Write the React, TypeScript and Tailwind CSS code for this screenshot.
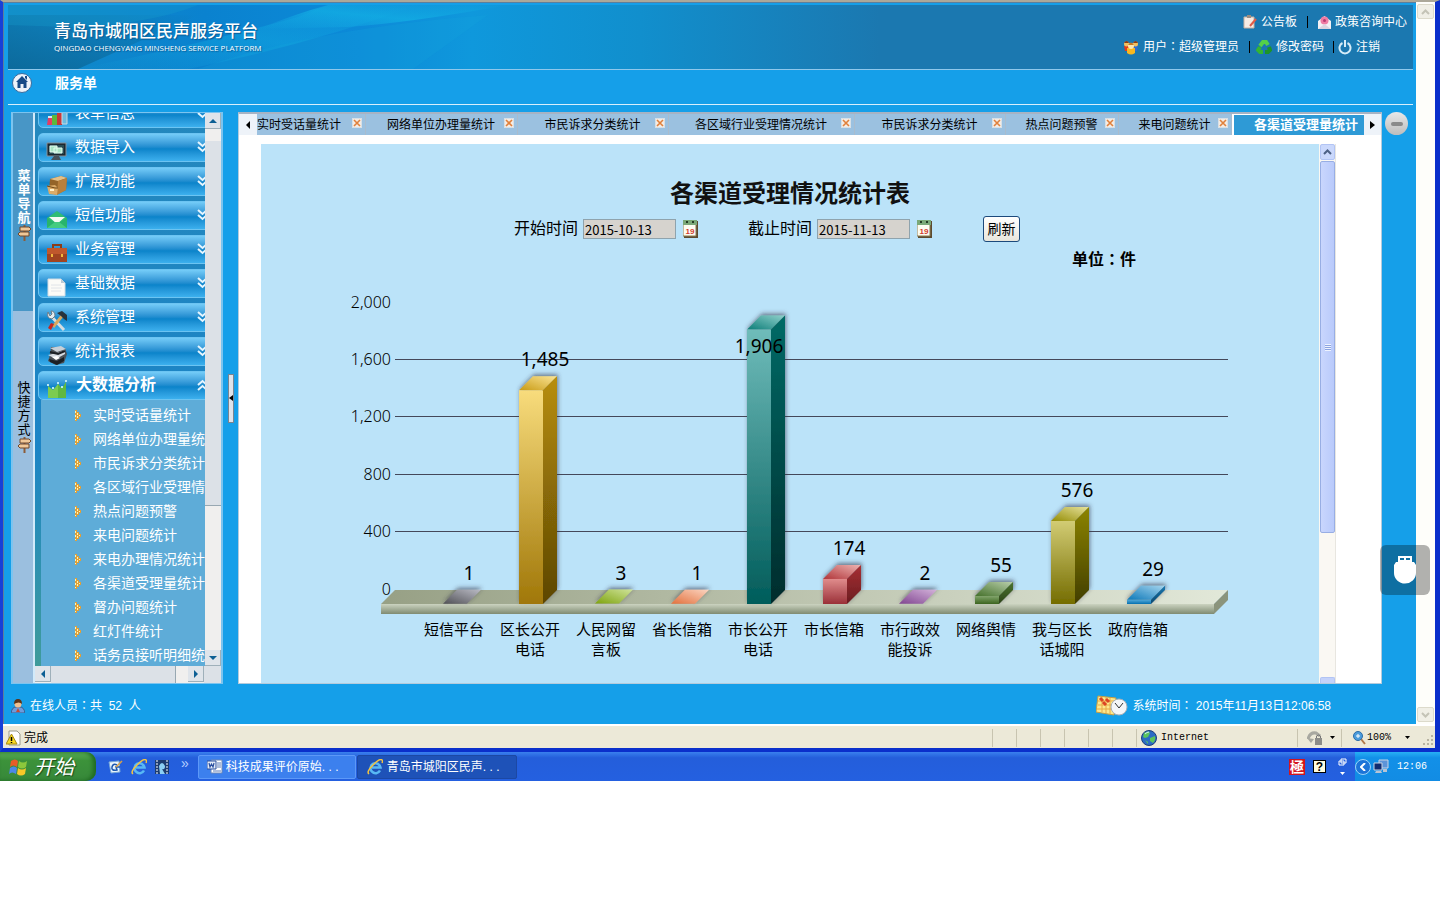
import { useState, type ReactNode } from "react";

interface Channel {
  name: string[];
  value: number;
  front: [string, string];
  side: [string, string];
  top: [string, string];
  labelInside?: boolean;
}

const CHANNELS: Channel[] = [
  { name: ["短信平台"], value: 1, front: ["#8a8a90", "#55555c"], side: ["#66666c", "#333338"], top: ["#505055", "#b9bac4"] },
  { name: ["区长公开", "电话"], value: 1485, front: ["#f8dc7c", "#a07708"], side: ["#b88e0a", "#5c4604"], top: ["#c99b14", "#fbe596"] },
  { name: ["人民网留", "言板"], value: 3, front: ["#a8c850", "#6d9408"], side: ["#80a820", "#4f6d08"], top: ["#7ea30e", "#cfe39a"] },
  { name: ["省长信箱"], value: 1, front: ["#f0a080", "#d06838"], side: ["#d08058", "#904820"], top: ["#e2703c", "#fbd4c0"] },
  { name: ["市长公开", "电话"], value: 1906, front: ["#6fbcba", "#005c5a"], side: ["#006a66", "#002c2c"], top: ["#0c7d78", "#8fd0cb"], labelInside: true },
  { name: ["市长信箱"], value: 174, front: ["#e08c8c", "#9a3038"], side: ["#a83034", "#6a1c20"], top: ["#b03438", "#eeb4b2"] },
  { name: ["市行政效", "能投诉"], value: 2, front: ["#b088b8", "#704078"], side: ["#906098", "#503058"], top: ["#804590", "#d3b2da"] },
  { name: ["网络舆情"], value: 55, front: ["#80a468", "#3c6420"], side: ["#4c7430", "#2c4418"], top: ["#44702a", "#b8ceaa"] },
  { name: ["我与区长", "话城阳"], value: 576, front: ["#d2cc74", "#746c00"], side: ["#8c8400", "#423e00"], top: ["#948c04", "#e6e29c"] },
  { name: ["政府信箱"], value: 29, front: ["#50a8d8", "#0870b0"], side: ["#1878b0", "#084870"], top: ["#0c78b8", "#a4d4ee"] },
];

const GRID = [
  { label: "2,000", y: 31, line: false },
  { label: "1,600", y: 88, line: true },
  { label: "1,200", y: 145, line: true },
  { label: "800", y: 203, line: true },
  { label: "400", y: 260, line: true },
  { label: "0", y: 318, line: false },
];

const BASE_Y = 333;
const BAR_WIDTH = 24;
const DEPTH = 14;
const UNIT = 0.144;

const MENU = [
  { label: "表单信息", icon: <BooksIcon /> },
  { label: "数据导入", icon: <MonitorIcon /> },
  { label: "扩展功能", icon: <BoxIcon /> },
  { label: "短信功能", icon: <EnvelopeIcon /> },
  { label: "业务管理", icon: <BriefcaseIcon /> },
  { label: "基础数据", icon: <PaperIcon /> },
  { label: "系统管理", icon: <ToolsIcon /> },
  { label: "统计报表", icon: <PrinterIcon /> },
];

const SUB_MENU = [
  "实时受话量统计",
  "网络单位办理量统计",
  "市民诉求分类统计",
  "各区域行业受理情况统计",
  "热点问题预警",
  "来电问题统计",
  "来电办理情况统计",
  "各渠道受理量统计",
  "督办问题统计",
  "红灯件统计",
  "话务员接听明细统计",
];

const TABS = [
  { label: "实时受话量统计", width: "w-[109px]", text: "text-left" },
  { label: "网络单位办理量统计", width: "w-[152px]", text: "pl-3 text-center" },
  { label: "市民诉求分类统计", width: "w-[151px]", text: "pl-3 text-center" },
  { label: "各区域行业受理情况统计", width: "w-[186px]", text: "pl-3 text-center" },
  { label: "市民诉求分类统计", width: "w-[151px]", text: "pl-3 text-center" },
  { label: "热点问题预警", width: "w-[113px]", text: "pl-3 text-center" },
  { label: "来电问题统计", width: "w-[113px]", text: "pl-3 text-center" },
];

export default function App() {
  return (
    <div className="min-h-screen min-w-[1200px] overflow-hidden bg-white font-['Liberation_Sans','Noto_Sans_CJK_SC',sans-serif] text-xs text-black">
      <div className="relative border-t-2 border-r-[5px] border-b-4 border-l-[3px] border-t-[#aca899] border-r-[#0a2fcb] border-b-[#0a2fcb] border-l-[#1740d8]">
        <div className="flex">
          <div className="min-w-0 flex-1 border-t border-l border-[#5c7f9c] bg-[#159fe9]">
            <Banner />
            <nav className="mr-[3px] ml-1 flex h-[35px] items-center border-b border-[#d8effc] pb-2">
              <a href="#home" aria-label="首页" className="ml-1">
                <HomeIcon />
              </a>
              <a href="#orders" className="ml-[23px] text-sm font-bold text-white">
                服务单
              </a>
            </nav>
            <div className="mt-[7px] ml-[7px] flex h-[572px]">
              <Sidebar />
              <div className="flex w-[15px] items-center justify-center">
                <button aria-label="收起菜单" className="flex h-[49px] w-[6px] items-center border border-[#7a8490] bg-[#dfe3ea]">
                  <svg viewBox="0 0 4 6" className="h-[6px] w-1">
                    <path d="M4 0v6L0 3z" />
                  </svg>
                </button>
              </div>
              <Workspace />
              <div className="w-[34px] pl-[3px]">
                <button aria-label="最小化" className="flex size-[23px] items-center justify-center rounded-full bg-linear-to-b from-[#e8e8e8] to-[#bdbdbd]">
                  <span className="h-1 w-3 rounded-xs bg-[#8a8a8a]" />
                </button>
              </div>
            </div>
            <footer className="ml-[7px] flex h-10 items-center pt-1 text-white">
              <PersonIcon />
              <span className="ml-[5px]">
                在线人员
                <Colon />共&nbsp; 52 &nbsp;人
              </span>
              <span className="mr-[85px] ml-auto flex items-center gap-1">
                <CalendarClockIcon />
                <span>
                  系统时间
                  <Colon />
                  &nbsp;2015年11月13日12:06:58
                </span>
              </span>
            </footer>
          </div>
          <div className="flex w-[19px] flex-col justify-between bg-[#fefefa] px-px py-[2px]">
            <button disabled aria-label="向上滚动" className="flex h-[15px] items-center justify-center rounded-xs border border-[#dcdacb] bg-[#f0efe6]">
              <Chevron up color="#c4c3b6" />
            </button>
            <button disabled aria-label="向下滚动" className="flex h-[15px] items-center justify-center rounded-xs border border-[#dcdacb] bg-[#f0efe6]">
              <Chevron color="#c4c3b6" />
            </button>
          </div>
        </div>
        <StatusBar />
        <button aria-label="USB" className="absolute top-[543px] right-[5px] flex h-[50px] w-[50px] items-center justify-center rounded-md bg-black/30">
          <svg viewBox="0 0 24 28" className="h-7 w-6">
            <path fill="#fff" fillRule="evenodd" d="M5 0h14v6h2l2 3v8a11 10.500 0 0 1-22 0V9l2-3h2zM7 2v2h4V2zm6 0v2h4V2z" />
          </svg>
        </button>
      </div>
      <Taskbar />
    </div>
  );
}

// The traditional face sets the full-width colon in the middle of its cell.
function Colon() {
  return <span className="font-['Noto_Sans_CJK_TC',sans-serif] leading-none">：</span>;
}

function Banner() {
  return (
    <header className="relative mt-[2px] mr-[3px] ml-1 flex h-[65px] justify-between overflow-hidden border-b border-[#8fc8ec] bg-[#1b78b0]">
      <svg viewBox="0 0 1405 64" preserveAspectRatio="none" className="absolute inset-0 h-full w-full">
        <defs>
          <linearGradient id="bannerBase">
            <stop offset="0" stopColor="#118ac8" />
            <stop offset="0.14" stopColor="#0a82cf" />
            <stop offset="0.25" stopColor="#0c8ad8" />
            <stop offset="0.33" stopColor="#0f98dc" />
            <stop offset="0.45" stopColor="#118fcd" />
            <stop offset="0.62" stopColor="#1b78b0" />
          </linearGradient>
          <linearGradient id="bannerGlow" x1="0" y1="1" x2="1" y2="0">
            <stop offset="0" stopColor="#19b8ea" stopOpacity="0" />
            <stop offset="0.5" stopColor="#14b6e6" stopOpacity="0.6" />
            <stop offset="1" stopColor="#14b6e6" stopOpacity="0" />
          </linearGradient>
          <linearGradient id="bannerDark" x1="0" y1="1" x2="1" y2="0">
            <stop offset="0" stopColor="#0c6a9c" />
            <stop offset="1" stopColor="#0c6a9c" stopOpacity="0" />
          </linearGradient>
        </defs>
        <path d="M0 0h1405v64H0z" fill="url(#bannerBase)" />
        <path d="M0 10h190L70 64H0z" fill="url(#bannerDark)" />
        <path d="M0 0h190Q140 20 60 22L0 20z" fill="#18a0cc" opacity="0.3" />
        <path d="M70 64Q190 40 290 12L320 0h90Q300 40 180 64z" fill="url(#bannerGlow)" opacity="0.6" />
        <path d="M250 24Q290 8 320 0h180Q400 18 340 22z" fill="url(#bannerGlow)" />
        <path d="M190 64Q300 24 480 10L405 64z" fill="#14a4dc" opacity="0.25" />
      </svg>
      <div className="relative ml-[46px] pt-[17px] text-white [text-shadow:1px_1px_1px_#0a5b94]">
        <h1 className="text-[17px] leading-5 font-medium whitespace-nowrap">青岛市城阳区民声服务平台</h1>
        <p className="font-['Open_Sans',sans-serif] text-[8px] leading-3 whitespace-nowrap">QINGDAO CHENGYANG MINSHENG SERVICE PLATFORM</p>
      </div>
      <div className="relative mr-[6px] pt-1 text-white">
        <div className="flex h-[25px] items-center justify-end">
          <NoticeIcon />
          <a href="#notice" className="ml-1">公告板</a>
          <span className="mx-[10px] h-3 w-px bg-black" />
          <FlowerIcon />
          <a href="#policy" className="ml-1">政策咨询中心</a>
        </div>
        <div className="mr-[27px] flex h-[25px] items-center">
          <UsersIcon />
          <span className="ml-1">
            用户
            <Colon />
            超级管理员
          </span>
          <span className="mr-[6px] ml-[10px] h-3 w-px bg-black" />
          <RecycleIcon />
          <a href="#password" className="ml-1">修改密码</a>
          <span className="mr-1 ml-[9px] h-3 w-px bg-black" />
          <svg viewBox="0 0 14 16" className="h-4 w-[14px]" fill="none" stroke="#d5ecf8" strokeWidth="2">
            <path d="M4.500 4a5.500 5.500 0 1 0 5 0M7 1v7" />
          </svg>
          <a href="#logout" className="ml-1">注销</a>
        </div>
      </div>
    </header>
  );
}

function Sidebar() {
  return (
    <aside className="flex w-[212px] border-x-2 border-y border-[#7cc4ef]">
      <div className="flex w-5 flex-col">
        <button className="flex h-[198px] flex-col items-center bg-[#4896c6] pt-14 pl-[2px] text-[13px] leading-[14px] font-bold text-white">
          <VerticalText text="菜单导航" />
          <SignIcon />
        </button>
        <button className="flex flex-1 flex-col items-center bg-[#9bbfdf] pt-[70px] pl-[2px] text-[13px] leading-[14px]">
          <VerticalText text="快捷方式" />
          <SignIcon />
        </button>
      </div>
      <div className="flex min-w-0 flex-1 flex-col border-l-2 border-[#d2eafa]">
        <div className="flex h-[553px]">
          <div className="w-[170px] overflow-hidden bg-linear-to-b from-[#2488bd] via-[#1b84c6] via-60% to-[#3f9b9a] pl-[3px]">
            <ul className="-mt-[14px]">
              {MENU.map((item) => (
                <li key={item.label} className="mb-[5px]">
                  <MenuButton icon={item.icon}>{item.label}</MenuButton>
                </li>
              ))}
              <li>
                <MenuButton icon={<CrownIcon />} open>
                  大数据分析
                </MenuButton>
                <ul className="ml-[3px] bg-[#5eacd8] pt-[3px]">
                  {SUB_MENU.map((label) => (
                    <li key={label} className="flex h-6 items-center pl-[34px]">
                      <svg viewBox="0 0 6 11" className="h-[11px] w-[6px] shrink-0">
                        <path d="M0 0h2v2h2v2h2v3H4v2H2v2H0z" fill="#e0a038" />
                        <path d="M0 1h1v2H0zM0 5h1v2H0zM0 9h1v1H0zM2 3h1v2H2zM2 6h1v2H2zM4 5h1v1H4z" fill="#fff4b8" />
                      </svg>
                      <a href="#report" className="ml-3 text-sm leading-6 whitespace-nowrap text-white">
                        {label}
                      </a>
                    </li>
                  ))}
                </ul>
              </li>
            </ul>
          </div>
          <div className="flex flex-1 flex-col bg-[#f0efee]">
            <ArrowButton direction="up" />
            <div className="mt-3 h-[365px] border-b border-[#98a8b2] bg-[#dce1e7]" />
            <div className="flex-1" />
            <ArrowButton direction="down" />
          </div>
        </div>
        <div className="flex flex-1 bg-[#f0efee]">
          <ArrowButton direction="left" />
          <div className="w-[125px] border-r border-[#98a8b2] bg-[#dce1e7]" />
          <div className="w-3" />
          <ArrowButton direction="right" />
          <div className="flex-1 bg-[#dce1e7]" />
        </div>
      </div>
    </aside>
  );
}

function VerticalText({ text }: { text: string }) {
  return (
    <span className="flex flex-col">
      {text.split("").map((char) => (
        <span key={char}>{char}</span>
      ))}
    </span>
  );
}

function MenuButton({ icon, open, children }: { icon: ReactNode; open?: boolean; children: ReactNode }) {
  return (
    <button
      aria-expanded={!!open}
      className="flex h-[29px] w-[180px] items-center rounded-[5px] border border-[#6cc4f2] bg-linear-to-b from-[#74ccf8] via-[#0a84ca] via-55% to-[#3cb0ee] pb-px pl-[7px] text-white"
    >
      <span className="mt-[7px] size-[22px] shrink-0">{icon}</span>
      <span className={open ? "ml-2 text-base font-bold" : "ml-[7px] text-[15px]"}>{children}</span>
      <svg viewBox="0 0 11 12" className="mr-[9px] ml-auto h-3 w-[11px]" fill="none" stroke="#e4f5ff" strokeWidth="2">
        <path d={open ? "M1 6l4.500-4L10 6M1 11l4.500-4L10 11" : "M1 1l4.500 4L10 1M1 6l4.500 4L10 6"} />
      </svg>
    </button>
  );
}

const ARROWS = {
  up: { label: "向上", path: "M0 6l4-4 4 4z" },
  down: { label: "向下", path: "M0 2h8L4 6z" },
  left: { label: "向左", path: "M6 0v8L2 4z" },
  right: { label: "向右", path: "M2 0v8l4-4z" },
};

function ArrowButton({ direction }: { direction: keyof typeof ARROWS }) {
  return (
    <button aria-label={ARROWS[direction].label} className="flex h-4 w-4 shrink-0 items-center justify-center border-r border-b border-[#9fb0ba] bg-[#dfe4ea]">
      <svg viewBox="0 0 8 8" className="size-2" fill="#0c5f94">
        <path d={ARROWS[direction].path} />
      </svg>
    </button>
  );
}

function Workspace() {
  return (
    <main className="flex min-w-0 flex-1 flex-col border border-t-2 border-[#b4cbdc] border-t-[#a6b3c4] bg-white">
      <div className="flex h-[21px] bg-[#9bc1e0]">
        <button aria-label="向左" className="flex w-[18px] shrink-0 items-center justify-center bg-[#eef3f9]">
          <svg viewBox="0 0 5 8" className="h-2 w-[5px]">
            <path d="M4 0v8L0 4z" />
          </svg>
        </button>
        {TABS.map((tab, index) => (
          <div key={index} className={`flex shrink-0 items-center border-r border-[#a9bccd] ${tab.width}`}>
            <button className={`flex-1 whitespace-nowrap ${tab.text}`}>{tab.label}</button>
            <button aria-label="关闭" className="mr-[3px] mb-1 size-[10px] border border-[#d8e0e6] bg-[#f4ece4]">
              <svg viewBox="0 0 8 8" className="size-2" stroke="#e0803c" strokeWidth="1.600">
                <path d="M1 1l6 6M7 1L1 7" />
              </svg>
            </button>
          </div>
        ))}
        <div className="flex min-w-0 flex-1 items-center justify-end overflow-hidden border-t border-l-2 border-white bg-[#2e9ad6] pr-[6px]">
          <button className="text-[13px] font-bold whitespace-nowrap text-white">各渠道受理量统计</button>
        </div>
        <button aria-label="向右" className="flex w-[17px] shrink-0 items-center justify-center bg-[#eef3f9]">
          <svg viewBox="0 0 5 8" className="h-2 w-[5px]">
            <path d="M0 0v8l5-4z" />
          </svg>
        </button>
      </div>
      <div className="mt-[9px] mr-[45px] ml-[22px] flex min-h-0 flex-1">
        <section className="min-w-0 flex-1 overflow-hidden bg-[#bbe3f9]">
          <ReportHeader />
          <ChannelChart />
        </section>
        <div className="flex w-[17px] flex-col border-r border-[#e8e6e0] bg-[#faf8f3] pl-px">
          <button aria-label="向上滚动" className="flex h-4 shrink-0 items-center justify-center rounded-xs border border-[#b2c4f4] bg-[#cad8fc]">
            <Chevron up color="#4d6185" />
          </button>
          <div className="mt-px flex h-[372px] items-center justify-center rounded-xs border border-[#98aee4] bg-linear-to-r from-[#c9d6fd] to-[#b9cafb]">
            <span className="h-[7px] w-[6px] bg-[repeating-linear-gradient(#eef3ff_0_1px,#8ca4e0_1px_2px)]" />
          </div>
          <div className="mt-auto h-[6px] rounded-t-xs border border-b-0 border-[#b2c4f4] bg-[#c4d2fa]" />
        </div>
      </div>
    </main>
  );
}

function ReportHeader() {
  const [start, setStart] = useState("2015-10-13");
  const [end, setEnd] = useState("2015-11-13");

  return (
    <div className="pt-8 text-base">
      <h2 className="text-center text-2xl leading-9 font-bold text-[#111]">各渠道受理情况统计表</h2>
      <div className="mt-[3px] flex h-7 items-center justify-center pr-[46px]">
        <DateField id="start" label="开始时间" value={start} onChange={setStart} />
        <div className="w-[50px]" />
        <DateField id="end" label="截止时间" value={end} onChange={setEnd} />
        <button className="ml-[51px] h-[26px] w-[37px] rounded-[3px] border border-[#1c4a7c] bg-linear-to-b from-white to-[#e8e6dc] text-sm leading-none">
          刷新
        </button>
      </div>
      <p className="mt-1 h-6 pr-[183px] text-right leading-[26px] font-bold">
        单位
        <Colon />件
      </p>
    </div>
  );
}

function DateField({ id, label, value, onChange }: { id: string; label: string; value: string; onChange: (value: string) => void }) {
  return (
    <div className="flex items-center">
      <label htmlFor={id}>{label}</label>
      <input
        id={id}
        value={value}
        onChange={(event) => onChange(event.target.value)}
        className="ml-[5px] h-5 w-[93px] border border-[#8fa3ad] bg-[#d6d3ce] px-px font-['Noto_Sans_CJK_SC',sans-serif] text-[13px]"
      />
      <svg viewBox="0 0 15 18" className="ml-[7px] h-[18px] w-[15px]">
        <path d="M1 1h14v17H1z" fill="#5c4a30" />
        <path d="M0 0h13v16H0z" fill="#fdfcf2" stroke="#8c7c50" />
        <path d="M0 0h14v5H0z" fill="#7aa878" />
        <path d="M3 2h2M9 2h2" stroke="#243c24" strokeWidth="2" />
        <text x="7" y="14" fontSize="8" fontWeight="bold" textAnchor="middle" fill="#d23c2c">19</text>
      </svg>
    </div>
  );
}

function ChannelChart() {
  return (
    <svg viewBox="0 0 1058 411" className="block w-full font-['Noto_Sans','Noto_Sans_CJK_SC',sans-serif]" role="img" aria-label="各渠道受理情况统计表">
      <defs>
        <filter id="barShadow" x="-50%" y="-50%" width="200%" height="200%">
          <feDropShadow dx="1" dy="-2" stdDeviation="2" floodColor="#334" floodOpacity="0.6" />
        </filter>
        <linearGradient id="floorTop">
          <stop offset="0" stopColor="#97a085" />
          <stop offset="1" stopColor="#e2e8d9" />
        </linearGradient>
        <linearGradient id="floorFront" x2="0" y2="1">
          <stop offset="0" stopColor="#cbd3c0" />
          <stop offset="1" stopColor="#7f8b72" />
        </linearGradient>
        {CHANNELS.map((channel, index) => (
          <g key={index}>
            <Shade id={`front${index}`} colors={channel.front} />
            <Shade id={`side${index}`} colors={channel.side} />
            <linearGradient id={`top${index}`} x1="0" y1="1" x2="1" y2="0">
              <stop offset="0" stopColor={channel.top[0]} />
              <stop offset="1" stopColor={channel.top[1]} />
            </linearGradient>
          </g>
        ))}
      </defs>
      {GRID.map((row) => (
        <g key={row.label}>
          <text x="130" y={row.y + 6} fontSize="16" fontWeight="300" textAnchor="end">{row.label}</text>
          {row.line && <path d={`M134 ${row.y + 0.5}H967`} stroke="#44485a" />}
        </g>
      ))}
      <path d={`M120 ${BASE_Y}l14-14h833l-14 14z`} fill="url(#floorTop)" />
      <path d={`M120 ${BASE_Y}h833v10H120z`} fill="url(#floorFront)" />
      <path d={`M953 ${BASE_Y}l14-14v10l-14 14z`} fill="#8b947c" />
      {CHANNELS.map((channel, index) => (
        <Bar key={index} channel={channel} index={index} />
      ))}
    </svg>
  );
}

function Shade({ id, colors }: { id: string; colors: [string, string] }) {
  return (
    <linearGradient id={id} x2="0" y2="1">
      <stop offset="0" stopColor={colors[0]} />
      <stop offset="1" stopColor={colors[1]} />
    </linearGradient>
  );
}

function Bar({ channel, index }: { channel: Channel; index: number }) {
  const x = 182 + index * 76;
  const height = channel.value * UNIT;
  const y = BASE_Y - height;

  return (
    <g>
      <g filter="url(#barShadow)">
        <path d={`M${x} ${y}l${DEPTH}-${DEPTH}h${BAR_WIDTH}l-${DEPTH} ${DEPTH}z`} fill={`url(#top${index})`} />
        {height > 1 && (
          <>
            <path d={`M${x} ${y}h${BAR_WIDTH}v${height}h-${BAR_WIDTH}z`} fill={`url(#front${index})`} />
            <path d={`M${x + BAR_WIDTH} ${y}l${DEPTH}-${DEPTH}v${height}l-${DEPTH} ${DEPTH}z`} fill={`url(#side${index})`} />
          </>
        )}
      </g>
      <text x={channel.labelInside ? x + 12 : x + 26} y={channel.labelInside ? y + 23 : y - DEPTH - 10} fontSize="19" textAnchor="middle">
        {channel.value.toLocaleString("en-US")}
      </text>
      {channel.name.map((line, row) => (
        <text key={line} x={x + 11} y={364 + row * 20} fontSize="15" textAnchor="middle">
          {line}
        </text>
      ))}
    </g>
  );
}

function StatusBar() {
  return (
    <div className="flex h-6 items-center border-t-2 border-white bg-[#ece9d8] pt-px pl-[3px]">
      <svg viewBox="0 0 15 16" className="h-4 w-[15px]">
        <path d="M3 1h8l3 3v11H3z" fill="#fff" stroke="#9a9a8c" />
        <path d="M5.500 4L11 14H0z" fill="#f8d820" stroke="#a88c10" />
        <path d="M5.500 7v4M5.500 12v1" stroke="#000" strokeWidth="1.500" />
      </svg>
      <span className="ml-[3px]">完成</span>
      <div className="ml-auto flex items-center">
        {[1, 2, 3, 4, 5, 6].map((cell) => (
          <span key={cell} className="h-[18px] w-6 border-l border-[#c8c4b0]" />
        ))}
        <div className="flex h-[18px] w-[161px] items-center border-l border-[#c8c4b0] pl-1">
          <GlobeIcon />
          <span className="ml-1 font-['Liberation_Mono',monospace] text-[10px]">Internet</span>
        </div>
        <div className="flex h-[18px] w-11 items-center border-l border-[#c8c4b0] pl-[9px]">
          <svg viewBox="0 0 17 16" className="h-4 w-[17px]">
            <path d="M1 9q2-7 8-6l4 3" fill="none" stroke="#a8a8a0" strokeWidth="3" />
            <path d="M0 8l4 5 3-4z" fill="#a8a8a0" />
            <path d="M8 8h7v7H8z" fill="#8c8c88" />
            <path d="M9.500 8V6q2-2 4 0v2" fill="none" stroke="#777" />
          </svg>
          <Caret />
        </div>
        <div className="flex h-[18px] w-[94px] items-center border-l border-[#c8c4b0] pl-[11px]">
          <svg viewBox="0 0 13 14" className="h-[14px] w-[13px]">
            <path d="M8 8l4 5" stroke="#b07848" strokeWidth="2" />
            <circle cx="5" cy="5" r="4.500" fill="#4c9cdc" stroke="#2c6ca8" />
            <path d="M5 3v4M3 5h4" stroke="#fff" />
          </svg>
          <span className="mr-2 ml-px font-['Liberation_Mono',monospace] text-[10px]">100%</span>
          <Caret />
          <svg viewBox="0 0 12 12" className="mt-[6px] ml-auto size-3" fill="#b8b4a2">
            <path d="M8 0h2v2H8zM4 4h2v2H4zM8 4h2v2H8zM0 8h2v2H0zM4 8h2v2H4zM8 8h2v2H8z" />
          </svg>
        </div>
      </div>
    </div>
  );
}

function Caret() {
  return (
    <svg viewBox="0 0 5 3" className="mx-[6px] h-[3px] w-[5px]">
      <path d="M0 0h5L2.500 3z" />
    </svg>
  );
}

function Taskbar() {
  return (
    <div className="flex h-[29px] items-center bg-linear-to-b from-[#3a80ee] via-[#245edb] via-20% to-[#2460e0] text-white">
      <button className="flex h-full w-[96px] items-center rounded-r-[10px] bg-linear-to-b from-[#5cae58] via-[#3c923a] via-30% to-[#37883a] pl-2 shadow-[inset_-3px_0_4px_#1f6a20]">
        <svg viewBox="0 0 20 20" className="size-5">
          <path d="M3 4q4-3 7 0l-1 6q-4-3-7 0z" fill="#e85c28" />
          <path d="M11 4q4 3 8 0l-1 6q-4 3-8 0z" fill="#8cc83c" />
          <path d="M2 11q4-3 7 0l-1 6q-4-3-7 0z" fill="#4c88e8" />
          <path d="M10 11q4 3 8 0l-1 6q-4 3-8 0z" fill="#f8c828" />
        </svg>
        <span className="ml-[6px] text-xl leading-none italic [text-shadow:1px_1px_1px_#1c4c1c]">开始</span>
      </button>
      <div className="ml-[11px] flex items-center gap-2">
        <DesktopIcon />
        <IeIcon />
        <svg viewBox="0 0 14 16" className="h-4 w-[14px]">
          <path d="M0 1h14v14H0z" fill="#1c3c70" />
          <path d="M1 2h2M1 5h2M1 8h2M1 11h2M1 14h2M11 2h2M11 5h2M11 8h2M11 11h2M11 14h2" stroke="#fff" />
          <path d="M4 7q3-6 6 0 0 4-3 3l3 5H5" fill="#8cd0f4" />
        </svg>
        <span className="mb-2 ml-1 text-sm leading-none text-[#b8d0ff]">»</span>
      </div>
      <button className="ml-[9px] flex h-6 w-[158px] items-center rounded-xs border border-[#5c98f8] bg-[#3c80ee] pl-2">
        <svg viewBox="0 0 16 16" className="size-4">
          <path d="M4 1h11v13H4z" fill="#fff" stroke="#6c88b8" />
          <path d="M10 4h4M10 6h4M10 8h4M6 12h8" stroke="#5c7cb8" />
          <path d="M0 2h9v8H0z" fill="#e4ecf8" stroke="#2c50a0" />
          <path d="M2 4l1 4 1.500-3L6 8l1-4" fill="none" stroke="#2c50a0" strokeWidth="1.200" />
        </svg>
        <span className="ml-[3px]">科技成果评价原始. . .</span>
      </button>
      <button className="ml-px flex h-6 w-[160px] items-center rounded-xs border border-[#1c48a4] bg-[#1e52b8] pl-[9px]">
        <IeIcon />
        <span className="ml-1">青岛市城阳区民声. . .</span>
      </button>
      <div className="ml-auto flex items-center">
        <span className="flex size-4 items-center justify-center bg-[#d4141c] text-sm leading-none font-bold">極</span>
        <span className="ml-2 flex size-[13px] items-center justify-center border border-black bg-[#fffce0] text-xs leading-none font-bold text-black">?</span>
        <svg viewBox="0 0 9 18" className="mr-2 ml-3 h-[18px] w-[9px]">
          <path d="M3 1h5v4H3zM1 3h5v4H1z" fill="#245edb" stroke="#fff" />
          <path d="M2 14h5l-2.500 3z" fill="#fff" />
        </svg>
      </div>
      <div className="flex h-[29px] items-center bg-linear-to-b from-[#28b0f4] via-[#1290e8] via-20% to-[#128ce4] pr-[13px]">
        <button aria-label="显示图标" className="flex size-4 items-center justify-center rounded-full border border-[#9cd4f8] bg-[#1c74d8]">
          <svg viewBox="0 0 6 8" className="h-2 w-[6px]" fill="none" stroke="#fff" strokeWidth="2">
            <path d="M5 0L1 4l4 4" />
          </svg>
        </button>
        <svg viewBox="0 0 16 16" className="ml-[2px] size-4">
          <path d="M6 1h9v8H6z" fill="#5c94d8" stroke="#c8d4e4" />
          <path d="M1 4h8v7H1z" fill="#102c70" stroke="#c8d4e4" />
          <path d="M3 12h5l1 2H2zM10 10h4v3h-4z" fill="#b8c4d4" />
        </svg>
        <span className="ml-2 font-['Liberation_Mono',monospace] text-[10px]">12:06</span>
      </div>
    </div>
  );
}

function Chevron({ up, color }: { up?: boolean; color: string }) {
  return (
    <svg viewBox="0 0 9 6" className="h-[6px] w-[9px]" fill="none" stroke={color} strokeWidth="2">
      <path d={up ? "M1 5l3.500-3.500L8 5" : "M1 1l3.500 3.500L8 1"} />
    </svg>
  );
}

function HomeIcon() {
  return (
    <svg viewBox="0 0 20 20" className="size-5">
      <circle cx="10" cy="10" r="9.500" fill="#eef3fa" stroke="#3c6c9c" />
      <path d="M10 3l6 6h-1.500v6h-3v-4h-3v4h-3V9H4z" fill="#184a86" />
      <path d="M13 3h2v4l-2-2z" fill="#184a86" />
    </svg>
  );
}

function NoticeIcon() {
  return (
    <svg viewBox="0 0 14 14" className="size-[14px]">
      <path d="M1 2h10v11H1z" fill="#f6ece4" stroke="#c8b0a0" />
      <path d="M4 0h4v3H4z" fill="#9c8c80" />
      <path d="M13 4L7 11" stroke="#e05c48" strokeWidth="2" />
    </svg>
  );
}

function FlowerIcon() {
  return (
    <svg viewBox="0 0 13 14" className="h-[14px] w-[13px]">
      <path d="M0 6l6.500-5L13 6v8H0z" fill="#f4f0f4" />
      <circle cx="6.500" cy="5.500" r="4" fill="#f07ca4" />
      <circle cx="6.500" cy="5.500" r="1.500" fill="#b83c74" />
      <path d="M0 14l6.500-5 6.500 5z" fill="#dcd4e0" />
    </svg>
  );
}

function UsersIcon() {
  return (
    <svg viewBox="0 0 16 16" className="size-4">
      <path d="M1 7h5v5H2z" fill="#e03c1c" />
      <path d="M10 7h5l-1 5h-4z" fill="#2c6cd0" />
      <circle cx="3.500" cy="5" r="2.500" fill="#f0c060" />
      <circle cx="12.500" cy="5" r="2.500" fill="#f0c060" />
      <path d="M1 4q2.500-4 5 0zM10 4q2.500-4 5 0z" fill="#8c3c14" />
      <path d="M4 9h8v5q-4 3-8 0z" fill="#f8b820" />
      <circle cx="8" cy="7" r="3" fill="#fce8b0" />
      <path d="M5 6q3-5 6 0z" fill="#c87820" />
    </svg>
  );
}

function RecycleIcon() {
  return (
    <svg viewBox="0 0 16 16" className="size-4" fill="none" strokeWidth="4">
      <path d="M4 7l3-4h3l2 3" stroke="#54d048" />
      <path d="M13 8l1 3-2 2H9" stroke="#1c9428" />
      <path d="M7 13H4l-2-2 2-3" stroke="#34b434" />
    </svg>
  );
}

function SignIcon() {
  return (
    <svg viewBox="0 0 15 16" className="h-4 w-[15px]">
      <path d="M6.500 0h2v16h-2z" fill="#8c5c38" />
      <path d="M3 2h9l2 2-2 2H3z" fill="#f0c898" stroke="#70482c" />
      <path d="M12 7H3L1 9l2 2h9z" fill="#f0c898" stroke="#70482c" />
    </svg>
  );
}

function PersonIcon() {
  return (
    <svg viewBox="0 0 14 14" className="size-[14px]">
      <path d="M0 14q1-6 5-6h4q4 0 5 6z" fill="#6c9cdc" stroke="#3c5c8c" />
      <path d="M7 9l2 4H5z" fill="#c84830" />
      <circle cx="7" cy="5" r="3.500" fill="#f0c090" />
      <path d="M3 5q0-5 4-5t4 5Q8 2 3 5z" fill="#5c3418" />
    </svg>
  );
}

function CalendarClockIcon() {
  return (
    <svg viewBox="0 0 32 22" className="h-[22px] w-8">
      <path d="M2 1l18 2-2 17L0 17z" fill="#fce88c" stroke="#c89c40" />
      <path d="M2 6h17M2 10h16M1 14h17M6 2v15M10 2v16M14 3v16" stroke="#e8a848" />
      <path d="M4 3l3 3M7 7l3 3M10 4l3 3" stroke="#dc4424" strokeWidth="3" />
      <circle cx="23" cy="12" r="8" fill="#f4f6f8" stroke="#a8b0b8" />
      <path d="M19 8l4 5 4-5" fill="none" stroke="#333" />
    </svg>
  );
}

function BooksIcon() {
  return (
    <svg viewBox="0 0 22 22">
      <path d="M2 10h5v9H2z" fill="#d8e8f0" />
      <path d="M2 12h4v7H1z" fill="#e43c64" />
      <path d="M6 9h5v10H6z" fill="#5cb83c" />
      <path d="M11 4h5v15h-5z" fill="#c83838" />
      <path d="M16 6h5v12h-5z" fill="#6cbce0" stroke="#c8dce4" />
    </svg>
  );
}

function MonitorIcon() {
  return (
    <svg viewBox="0 0 22 22">
      <path d="M1 3h19v13H1z" fill="#1c2830" stroke="#86929a" />
      <path d="M3 5h15v9H3z" fill="#284c54" />
      <path d="M4 6h7v6H4zM8 8h8v5H8z" fill="#a8e4c4" stroke="#e4fcf0" />
      <path d="M8 16h5l2 4H5z" fill="#46525a" />
    </svg>
  );
}

function BoxIcon() {
  return (
    <svg viewBox="0 0 22 22">
      <path d="M4 5l11-3 6 2-1 12-10 5-7-3z" fill="#946428" />
      <path d="M4 5l11-3 6 2-9 3z" fill="#e4c088" />
      <path d="M12 7l9-3-1 12-9 5z" fill="#b8803c" />
      <path d="M1 12l8-1 3 3-1 7-8-1z" fill="#dcac68" />
      <path d="M1 12l8 2 3 0" stroke="#6c4414" fill="none" />
      <path d="M4 16h4" stroke="#fff0c8" strokeWidth="2" />
    </svg>
  );
}

function EnvelopeIcon() {
  return (
    <svg viewBox="0 0 22 22">
      <path d="M1 10l10-7 10 7v10H1z" fill="#30bc74" />
      <path d="M3 9h16l-8 7z" fill="#f4fbf4" />
      <path d="M1 10l10 6 10-6v10H1z" fill="#28b46c" />
      <path d="M1 20l8-6h4l8 6z" fill="#44cc80" />
    </svg>
  );
}

function BriefcaseIcon() {
  return (
    <svg viewBox="0 0 22 22">
      <path d="M7 6V3h8v3" fill="none" stroke="#8c3c18" strokeWidth="2" />
      <path d="M1 6h20v14H1z" fill="#c0582c" />
      <path d="M1 12h20v8H1z" fill="#a04420" />
      <path d="M5 12h2v3H5zM15 12h2v3h-2z" fill="#f0b83c" />
    </svg>
  );
}

function PaperIcon() {
  return (
    <svg viewBox="0 0 22 22">
      <path d="M2 3h13l4 4v13H2z" fill="#fbfbf7" stroke="#d0dce4" />
      <path d="M15 3v4h4z" fill="#bccad4" />
      <path d="M5 9h10M5 12h11M5 15h10" stroke="#e0e4e8" />
    </svg>
  );
}

function ToolsIcon() {
  return (
    <svg viewBox="0 0 22 22">
      <path d="M4 5l14 15" stroke="#d4dce0" strokeWidth="3" />
      <path d="M2 2q-2 6 4 7l3-3q0-5-4-5l1 3-2 2z" fill="#e4ecf0" stroke="#6c7c88" />
      <path d="M16 6L7 17" stroke="#d8a860" strokeWidth="3" />
      <path d="M11 3l5-2 5 4v6l-3-2-3-3z" fill="#28323c" />
      <path d="M8 14l-3 6-3-2 3-5z" fill="#c42820" />
    </svg>
  );
}

function PrinterIcon() {
  return (
    <svg viewBox="0 0 22 22">
      <path d="M5 3l14 1 2 6-3 9-8 2-8-4 2-6z" fill="#4c5258" />
      <path d="M4 4l11-2 5 3-9 3z" fill="#c8d0d8" />
      <path d="M2 11l9-2 8-3v4l-9 5z" fill="#d4dae0" />
      <path d="M3 15l8 2 7-4v4l-7 4-7-3z" fill="#1c2024" />
      <path d="M4 8l8 2 7-3" stroke="#1c2024" strokeWidth="2" fill="none" />
      <path d="M6 13l5-1 3 2-4 2z" fill="#fff" />
    </svg>
  );
}

function CrownIcon() {
  return (
    <svg viewBox="0 0 22 22">
      <path d="M2 8l5 4 5-6 4 5 4-7v16H2z" fill="#7ccc50" />
      <path d="M12 6l4 5 4-7v16h-8z" fill="#60b840" />
      <path d="M1 6h2v2H1zM6 9h2v2H6zM11 4h2v2h-2zM15 8h2v2h-2zM19 2h2v2h-2z" fill="#b4e8f8" />
    </svg>
  );
}

function GlobeIcon() {
  return (
    <svg viewBox="0 0 16 16" className="size-4">
      <circle cx="8" cy="8" r="7.500" fill="#2c6cc4" stroke="#1c3c7c" />
      <path d="M3 3q5-3 6 0l-2 4-3 1-2-1zM9 8l5-2q1 4-2 7l-3-2zM4 10l3 2v2z" fill="#5cc45c" />
      <path d="M4 4q2-2 4-2" stroke="#d0ecff" fill="none" />
    </svg>
  );
}

function DesktopIcon() {
  return (
    <svg viewBox="0 0 16 16" className="size-4">
      <path d="M2 3l10-1 1 11-9 1z" fill="#e8f4fc" stroke="#78a8d8" />
      <path d="M10 6q-4-2-5 2t5 3l-1-3h4" fill="none" stroke="#1c58b0" strokeWidth="1.500" />
      <path d="M15 2L9 8" stroke="#d8a048" strokeWidth="1.500" />
    </svg>
  );
}

function IeIcon() {
  return (
    <svg viewBox="0 0 16 16" className="size-4" fill="none">
      <path d="M13 11.500a5 5 0 1 1 .5-3H5" stroke="#58b8f4" strokeWidth="2.500" />
      <path d="M2 15Q-1 13 6 6t9-5q1 1 0 3" stroke="#f4c440" strokeWidth="1.500" />
    </svg>
  );
}
